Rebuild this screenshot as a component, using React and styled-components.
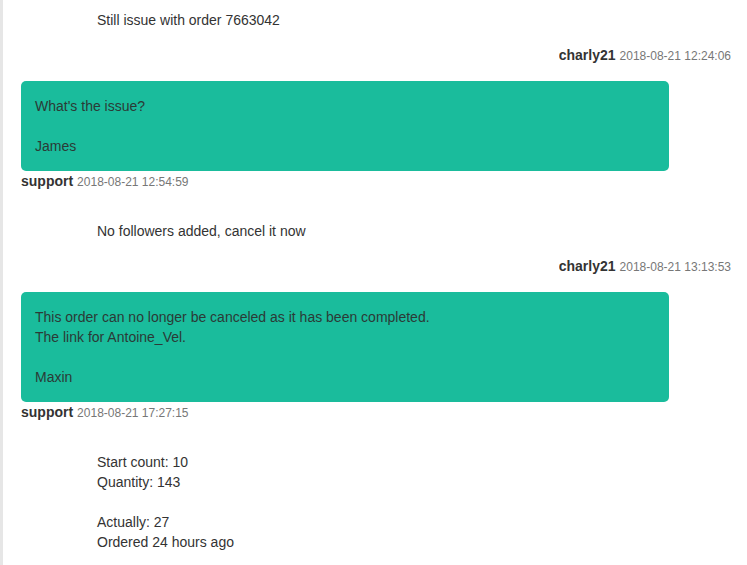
import React from 'react';
import styled, { createGlobalStyle } from 'styled-components';

const GlobalStyle = createGlobalStyle`
  html, body {
    margin: 0;
    padding: 0;
    background: #fff;
    overflow: hidden;
  }
  body {
    font-family: 'Liberation Sans', Arial, sans-serif;
    font-size: 14px;
    line-height: 20px;
    color: #333;
  }
`;

const Page = styled.div`
  height: 565px;
  border-left: 3px solid #e6e6e6;
  padding: 0 16px 0 18px;
  box-sizing: border-box;
  overflow: hidden;
`;

const Thread = styled.div`
  display: flex;
  flex-direction: column;
  margin-top: -5px;
`;

const Group = styled.div`
  display: flex;
  flex-direction: column;
  align-items: ${p => (p.mine ? 'flex-end' : 'flex-start')};
  margin-bottom: ${p => (p.mine ? 16 : 15)}px;
`;

const Bubble = styled.div`
  width: 648px;
  box-sizing: border-box;
  padding: 15px 14px;
  border-radius: 5px;
  background: ${p => (p.mine ? 'transparent' : '#1abc9c')};
  color: ${p => (p.mine ? '#333' : '#2b3a36')};
  white-space: pre-line;
`;

const Meta = styled.div`
  height: 20px;
  line-height: 20px;
  white-space: nowrap;
  overflow: hidden;
`;

const Author = styled.b`
  font-weight: 700;
  font-size: 14px;
  color: #333;
`;

const Stamp = styled.span`
  font-size: 12px;
  color: #777;
  margin-left: 4px;
`;

const messages = [
  { mine: true, author: 'charly21', time: '2018-08-21 12:24:06', text: 'Still issue with order 7663042' },
  { mine: false, author: 'support', time: '2018-08-21 12:54:59', text: "What's the issue?\n\nJames" },
  { mine: true, author: 'charly21', time: '2018-08-21 13:13:53', text: 'No followers added, cancel it now' },
  {
    mine: false,
    author: 'support',
    time: '2018-08-21 17:27:15',
    text: 'This order can no longer be canceled as it has been completed.\nThe link for Antoine_Vel.\n\nMaxin',
  },
  { mine: true, text: 'Start count: 10\nQuantity: 143\n\nActually: 27\nOrdered 24 hours ago' },
];

const App = () => (
  <>
    <GlobalStyle />
    <Page>
      <Thread>
        {messages.map((m, i) => (
          <Group key={i} mine={m.mine}>
            <Bubble mine={m.mine}>{m.text}</Bubble>
            {m.author && (
              <Meta>
                <Author>{m.author}</Author>
                <Stamp>{m.time}</Stamp>
              </Meta>
            )}
          </Group>
        ))}
      </Thread>
    </Page>
  </>
);

export default App;
